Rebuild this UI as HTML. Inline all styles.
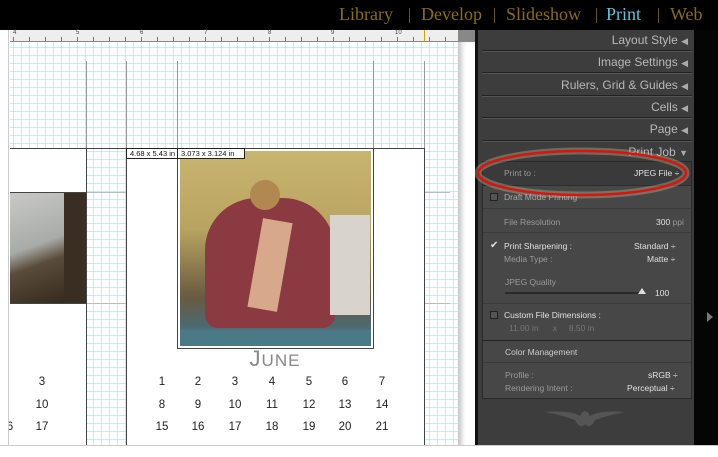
<!DOCTYPE html>
<html><head><meta charset="utf-8"><style>
*{margin:0;padding:0;box-sizing:border-box}
body{width:718px;height:457px;overflow:hidden;background:#fff;font-family:"Liberation Sans",sans-serif;position:relative}
.a{position:absolute}
.top{left:0;top:0;width:718px;height:30px;background:#000}
.nav{top:4px;font-family:"Liberation Serif",serif;font-size:18px;color:#8a6d10}
.sep{top:8px;width:1px;height:15px;background:#6a5510}
.grid{left:10px;top:42px;width:448px;height:405px;background-color:#fff;
background-image:linear-gradient(90deg,rgba(150,225,235,.55) 1px,transparent 1px),linear-gradient(rgba(150,225,235,.55) 1px,transparent 1px);
background-size:8px 8px;background-position:3px 5px}
.v{width:1px;background:#444}
.h{height:1px;background:#444}
.g{height:1px;background:#bbb}
.ph{font-size:12px;color:#b8b8b8;right:30px;text-align:right}
.tri{font-size:9px;color:#aaa}
.ln{left:482px;width:210px;height:2px;background:#222;border-bottom:1px solid #555}
.lbl{font-size:8.5px;color:#9a9a9a}
.val{font-size:8.5px;color:#e0e0e0}
.num{font-size:11.5px;color:#222;width:30px;text-align:center}
</style></head><body>
<div class="a top"></div>
<div class="a nav" style="left:339px">Library</div>
<div class="a sep" style="left:409px"></div>
<div class="a nav" style="left:421px">Develop</div>
<div class="a sep" style="left:494px"></div>
<div class="a nav" style="left:506px">Slideshow</div>
<div class="a sep" style="left:596px"></div>
<div class="a nav" style="left:606px;color:#5cc6d8">Print</div>
<div class="a sep" style="left:658px"></div>
<div class="a nav" style="left:670px">Web</div>
<div class="a" style="left:10px;top:30px;width:448px;height:12px;background:#eee;border-bottom:1px solid #888;
background-image:linear-gradient(90deg,#777 1px,transparent 1px);background-size:16px 4px;background-repeat:repeat-x;background-position:3px 7px"></div>
<div class="a" style="left:458px;top:30px;width:17px;height:12px;background:#888"></div>
<div class="a" style="left:424px;top:30px;width:1px;height:12px;background:#d9a000"></div>
<div class="a" style="left:13px;top:30px;font-size:6px;color:#444">4</div>
<div class="a" style="left:76px;top:30px;font-size:6px;color:#444">5</div>
<div class="a" style="left:140px;top:30px;font-size:6px;color:#444">6</div>
<div class="a" style="left:204px;top:30px;font-size:6px;color:#444">7</div>
<div class="a" style="left:268px;top:30px;font-size:6px;color:#444">8</div>
<div class="a" style="left:331px;top:30px;font-size:6px;color:#444">9</div>
<div class="a" style="left:395px;top:30px;font-size:6px;color:#444">10</div>
<div class="a" style="left:458px;top:42px;width:17px;height:415px;background:#fff;box-shadow:inset 6px 0 6px -3px #bbb"></div>
<div class="a grid"></div>
<div class="a g" style="left:86px;top:192px;width:40px"></div>
<div class="a g" style="left:86px;top:303px;width:40px"></div>
<div class="a g" style="left:424px;top:192px;width:26px"></div>
<div class="a g" style="left:424px;top:303px;width:26px"></div>
<div class="a" style="left:10px;top:148px;width:76px;height:300px;background:#fff"></div>
<div class="a" style="left:126px;top:148px;width:298px;height:300px;background:#fff"></div>
<div class="a h" style="left:10px;top:148px;width:415px"></div>
<div class="a v" style="left:86px;top:61px;height:390px;background:#999"></div>
<div class="a v" style="left:126px;top:61px;height:390px;background:#999"></div>
<div class="a v" style="left:177px;top:61px;height:90px;background:#999"></div>
<div class="a v" style="left:373px;top:61px;height:90px;background:#999"></div>
<div class="a v" style="left:424px;top:61px;height:390px;background:#999"></div>
<div class="a v" style="left:86px;top:148px;height:300px"></div>
<div class="a v" style="left:126px;top:148px;height:300px"></div>
<div class="a v" style="left:424px;top:148px;height:300px"></div>
<div class="a" style="left:10px;top:192px;width:76px;height:111px;background:linear-gradient(160deg,#c9cac8 0%,#a9aba8 45%,#5a4c3a 60%,#2e2418 100%)"></div>
<div class="a" style="left:64px;top:192px;width:22px;height:111px;background:#3a2e22"></div>
<div class="a h" style="left:10px;top:303px;width:76px"></div>
<div class="a h" style="left:10px;top:192px;width:76px"></div>
<div class="a" style="left:177px;top:148px;width:197px;height:201px;border:1px solid #444;background:#fff"></div>
<div class="a" style="left:180px;top:151px;width:191px;height:195px;background:linear-gradient(180deg,#c8b570 0%,#b8a460 40%,#6a5a40 75%,#4a6a70 90%,#7a8a80 100%)"></div>
<div class="a" style="left:205px;top:198px;width:130px;height:130px;border-radius:40% 40% 10% 10%;background:#8a3a40"></div>
<div class="a" style="left:330px;top:215px;width:40px;height:100px;background:#d8d4cc"></div>
<div class="a" style="left:250px;top:180px;width:30px;height:30px;border-radius:50%;background:#b08850"></div>
<div class="a" style="left:255px;top:220px;width:30px;height:90px;background:#d8a88a;transform:rotate(10deg)"></div>
<div class="a" style="left:180px;top:330px;width:191px;height:16px;background:#4a7a88"></div>
<div class="a" style="left:126px;top:148px;width:55px;height:11px;border:1px solid #222;background:#fff;font-size:7.5px;line-height:9px;padding-left:3px;color:#111">4.68 x 5.43 in</div>
<div class="a" style="left:177px;top:148px;width:68px;height:11px;border:1px solid #222;background:#fff;font-size:7.5px;line-height:9px;padding-left:3px;color:#111">3.073 x 3.124 in</div>
<div class="a" style="left:126px;top:346px;width:298px;text-align:center;font-size:22px;color:#888;letter-spacing:1px">J<span style="font-size:17px">UNE</span></div>
<div class="a num" style="left:147px;top:376px">1</div><div class="a num" style="left:183px;top:376px">2</div><div class="a num" style="left:220px;top:376px">3</div><div class="a num" style="left:257px;top:376px">4</div><div class="a num" style="left:294px;top:376px">5</div><div class="a num" style="left:330px;top:376px">6</div><div class="a num" style="left:367px;top:376px">7</div>
<div class="a num" style="left:147px;top:399px">8</div><div class="a num" style="left:183px;top:399px">9</div><div class="a num" style="left:220px;top:399px">10</div><div class="a num" style="left:257px;top:399px">11</div><div class="a num" style="left:294px;top:399px">12</div><div class="a num" style="left:330px;top:399px">13</div><div class="a num" style="left:367px;top:399px">14</div>
<div class="a num" style="left:147px;top:421px">15</div><div class="a num" style="left:183px;top:421px">16</div><div class="a num" style="left:220px;top:421px">17</div><div class="a num" style="left:257px;top:421px">18</div><div class="a num" style="left:294px;top:421px">19</div><div class="a num" style="left:330px;top:421px">20</div><div class="a num" style="left:367px;top:421px">21</div>
<div class="a num" style="left:27px;top:376px">3</div><div class="a num" style="left:27px;top:399px">10</div><div class="a num" style="left:27px;top:421px">17</div>
<div class="a num" style="left:0px;top:421px;width:20px">6</div>
<div class="a" style="left:0;top:30px;width:9px;height:427px;background:#fff;border-right:1px solid #ccc"></div>
<div class="a" style="left:0;top:445px;width:718px;height:12px;background:#fff;border-top:1px solid #ccc"></div>
<div class="a" style="left:475px;top:30px;width:3px;height:415px;background:#111"></div>
<div class="a" style="left:478px;top:30px;width:216px;height:415px;background:#3d3d3d"></div>
<div class="a" style="left:694px;top:30px;width:24px;height:415px;background:#050505"></div>
<div class="a" style="left:707px;top:312px;width:0;height:0;border-left:6px solid #777;border-top:5px solid transparent;border-bottom:5px solid transparent"></div>
<div class="a ph" style="top:33px">Layout Style <span class="tri">◀</span></div>
<div class="a ln" style="top:50px"></div>
<div class="a ph" style="top:55px">Image Settings <span class="tri">◀</span></div>
<div class="a ln" style="top:72px"></div>
<div class="a ph" style="top:78px">Rulers, Grid &amp; Guides <span class="tri">◀</span></div>
<div class="a ln" style="top:95px"></div>
<div class="a ph" style="top:100px">Cells <span class="tri">◀</span></div>
<div class="a ln" style="top:117px"></div>
<div class="a ph" style="top:122px">Page <span class="tri">◀</span></div>
<div class="a ln" style="top:140px"></div>
<div class="a ph" style="top:145px">Print Job <span class="tri">▼</span></div>
<div class="a" style="left:482px;top:161px;width:210px;height:238px;background:#474747;border:1px solid #2a2a2a"></div>
<div class="a" style="left:483px;top:162px;width:208px;height:24px;background:#3a3a3a;border-bottom:1px solid #2d2d2d"></div>
<div class="a lbl" style="left:504px;top:168px">Print to :</div>
<div class="a val" style="left:634px;top:168px">JPEG File ÷</div>
<div class="a" style="left:490px;top:193px;width:8px;height:8px;border:1px solid #222;background:#555"></div>
<div class="a lbl" style="left:504px;top:192px;color:#aaa">Draft Mode Printing</div>
<div class="a" style="left:483px;top:208px;width:208px;height:1px;background:#3a3a3a"></div>
<div class="a lbl" style="left:504px;top:217px">File Resolution</div>
<div class="a val" style="left:656px;top:217px">300 <span style="color:#999">ppi</span></div>
<div class="a" style="left:483px;top:232px;width:208px;height:1px;background:#3a3a3a"></div>
<div class="a val" style="left:490px;top:240px;font-size:10px">✔</div>
<div class="a val" style="left:504px;top:241px">Print Sharpening :</div>
<div class="a val" style="left:634px;top:241px">Standard ÷</div>
<div class="a lbl" style="left:504px;top:254px">Media Type :</div>
<div class="a val" style="left:647px;top:254px">Matte ÷</div>
<div class="a lbl" style="left:505px;top:277px">JPEG Quality</div>
<div class="a" style="left:505px;top:292px;width:140px;height:2px;background:#2a2a2a"></div>
<div class="a" style="left:638px;top:288px;width:0;height:0;border-bottom:6px solid #ddd;border-left:4px solid transparent;border-right:4px solid transparent"></div>
<div class="a val" style="left:655px;top:288px">100</div>
<div class="a" style="left:483px;top:303px;width:208px;height:1px;background:#3a3a3a"></div>
<div class="a" style="left:490px;top:311px;width:8px;height:8px;border:1px solid #222;background:#555"></div>
<div class="a val" style="left:504px;top:310px">Custom File Dimensions :</div>
<div class="a lbl" style="left:509px;top:323px;color:#777">11.00 in &nbsp;&nbsp;&nbsp;&nbsp; x &nbsp;&nbsp;&nbsp; 8.50 in</div>
<div class="a" style="left:483px;top:340px;width:208px;height:1px;background:#222"></div>
<div class="a val" style="left:505px;top:347px;color:#ccc">Color Management</div>
<div class="a" style="left:483px;top:362px;width:208px;height:1px;background:#3a3a3a"></div>
<div class="a lbl" style="left:505px;top:370px">Profile :</div>
<div class="a val" style="left:648px;top:370px">sRGB ÷</div>
<div class="a lbl" style="left:505px;top:383px">Rendering Intent :</div>
<div class="a val" style="left:627px;top:383px">Perceptual ÷</div>
<svg class="a" style="left:540px;top:402px" width="90" height="30"><path d="M5 10 Q30 8 40 14 Q45 4 50 14 Q60 8 85 10 Q65 14 55 18 Q50 28 45 22 Q40 28 35 18 Q25 14 5 10Z" fill="#555"/></svg>
<svg class="a" style="left:470px;top:140px" width="230" height="70"><ellipse cx="112" cy="33" rx="104" ry="22" fill="none" stroke="rgba(200,200,150,.35)" stroke-width="7"/><ellipse cx="112" cy="33" rx="104" ry="22" fill="none" stroke="#e01010" stroke-width="2.5"/></svg>
</body></html>
